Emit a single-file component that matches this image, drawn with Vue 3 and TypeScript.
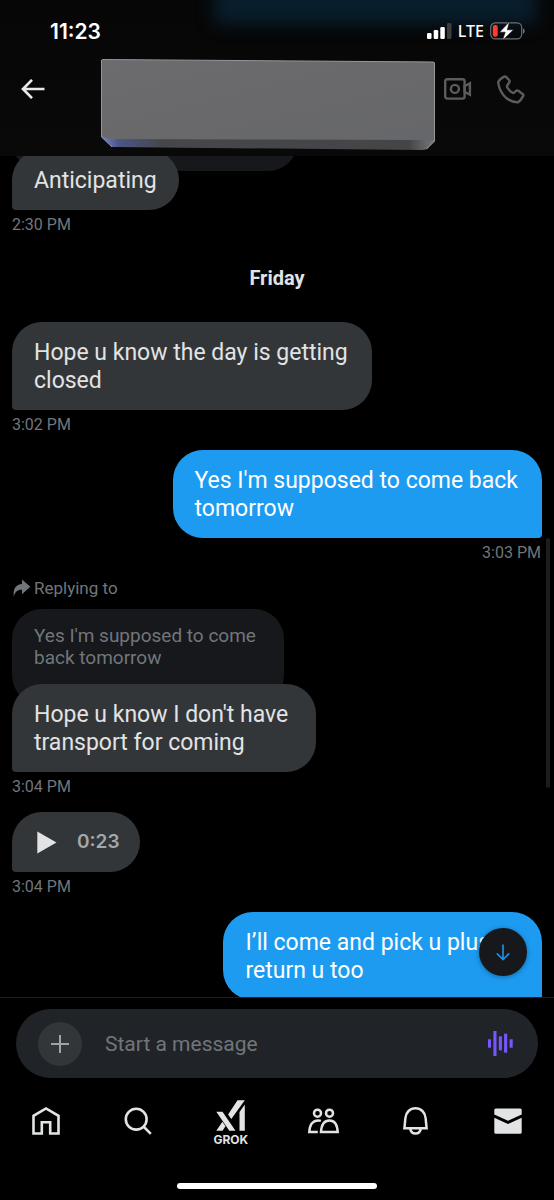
<script setup lang="ts">
import { ref } from 'vue'

interface Message {
  id: number
  kind: 'text' | 'voice'
  sent: boolean
  lines: string[]
  time: string
  room?: 'roomy' | 'wide'
  quote?: string[]
}

const draft = ref('')

const messages: Message[] = [
  { id: 1, kind: 'text', sent: false, lines: ['Hope u know the day is getting', 'closed'], time: '3:02 PM' },
  { id: 2, kind: 'text', sent: true, lines: ["Yes I'm supposed to come back", 'tomorrow'], time: '3:03 PM' },
  {
    id: 3,
    kind: 'text',
    sent: false,
    lines: ["Hope u know I don't have", 'transport for coming'],
    time: '3:04 PM',
    room: 'roomy',
    quote: ["Yes I'm supposed to come", 'back tomorrow'],
  },
  { id: 4, kind: 'voice', sent: false, lines: ['0:23'], time: '3:04 PM' },
  { id: 5, kind: 'text', sent: true, lines: ['I’ll come and pick u plus', 'return u too'], time: '', room: 'wide' },
]
</script>

<template>
  <div class="phone">
    <header class="top">
      <div class="glow"></div>
      <div class="status">
        <span class="clock">11:23</span>
        <div class="indicators">
          <svg width="25" height="16" viewBox="0 0 25 16" fill="#fff">
            <rect x="0" y="10" width="4.5" height="6" rx="1.3" />
            <rect x="6.7" y="7" width="4.5" height="9" rx="1.3" />
            <rect x="13.3" y="4" width="4.5" height="12" rx="1.3" />
            <rect x="20" y="0" width="4.5" height="16" rx="1.3" fill="#3b3d40" />
          </svg>
          <span class="network">LTE</span>
          <svg width="35" height="18" viewBox="0 0 35 18">
            <rect x="0.7" y="0.9" width="31" height="16" rx="4.6" fill="none" stroke="#6d7073" stroke-width="1.2" />
            <path d="M33.2 6.4c1.8.7 1.8 4.5 0 5.2z" fill="#8a8c8e" />
            <rect x="2.8" y="3" width="4.9" height="11.8" rx="2" fill="#ff3b30" />
            <path d="M19.6-.4 9.500 10.2h5.700L12.400 18.400 23.600 7.800h-6.300z" fill="#fff" stroke="#0a0d10" stroke-width="0.600" />
          </svg>
        </div>
      </div>
      <div class="bar">
        <button class="icon-button" type="button" aria-label="Back">
          <svg width="24" height="20" viewBox="0 0 24 20" fill="none" stroke="#e7e9ea" stroke-width="2.700">
            <path d="M11 .9 2 10l9 9.100M2 10h21.500" />
          </svg>
        </button>
        <svg class="plate" viewBox="0 0 334 92" preserveAspectRatio="none" aria-hidden="true">
          <defs>
            <linearGradient id="face" x1="0" y1="0" x2="1" y2="1">
              <stop offset="0" stop-color="#6c6c6e" />
              <stop offset="0.5" stop-color="#69696b" />
              <stop offset="1" stop-color="#66676a" />
            </linearGradient>
            <linearGradient id="lip" x1="0" y1="0" x2="1" y2="0">
              <stop offset="0" stop-color="#7785c4" />
              <stop offset="0.05" stop-color="#4b5688" />
              <stop offset="0.18" stop-color="#46474b" />
              <stop offset="0.92" stop-color="#444547" />
              <stop offset="1" stop-color="#77787a" />
            </linearGradient>
            <linearGradient id="rim" x1="0" y1="0" x2="1" y2="0">
              <stop offset="0" stop-color="#7e8fdc" />
              <stop offset="0.14" stop-color="#909098" />
              <stop offset="1" stop-color="#98989a" />
            </linearGradient>
          </defs>
          <path d="M2 .5 332 3q2 0 2 2V82l-8 8q-2 1-5 1L11 88 .5 78V2q0-1.500 1.500-1.500z" fill="url(#lip)" />
          <path d="M2 .5 332 3q2 0 2 2V81L8 80 .5 77V2q0-1.500 1.500-1.500z" fill="url(#face)" />
          <path d="M11 88 .5 78V2Q.5.500 2 .5L332 3q1.500 0 1.500 2V82l-8 8" fill="none" stroke="url(#rim)" stroke-width="1" />
        </svg>
        <button class="icon-button" type="button" aria-label="Video call">
          <svg width="28" height="22" viewBox="0 0 28 22" fill="none" stroke="#5a5c5e" stroke-width="2.400">
            <rect x="1.200" y="1.200" width="19.400" height="19.400" rx="2" />
            <circle cx="10.900" cy="10.900" r="4" />
            <path d="M20.600 8.200 25.900 5.200v11.600l-5.300-3z" />
          </svg>
        </button>
        <button class="icon-button phone-call" type="button" aria-label="Call">
          <svg width="28" height="29" viewBox="0 0 28 29" fill="none" stroke="#5a5c5e" stroke-width="2.400" stroke-linejoin="round">
            <path d="M6.600 1.900Q8 .900 9.300 2.100L12.100 5q1 1.200.1 2.500L10.200 10.500q-.5 1 .1 2 2 3.600 5.300 5.300 1 .5 1.700-.3l1.800-1.700q1-.8 2.200 0L25.600 19q1.400 1 .4 2.400-1.900 3.800-5.200 6Q12.300 27 6.800 20.400 1.500 14 1.200 6.800 3.200 3.600 6.600 1.900z" />
          </svg>
        </button>
      </div>
    </header>

    <main class="chat">
      <div class="thread">
        <div class="message">
          <div class="quote earlier"></div>
          <p class="bubble single">Anticipating</p>
          <time class="time">2:30 PM</time>
        </div>

        <h2 class="day">Friday</h2>

        <div v-for="m in messages" :key="m.id" class="message" :class="{ sent: m.sent }">
          <template v-if="m.quote">
            <div class="reply-label">
              <svg width="18" height="18" viewBox="0 0 18 18" fill="#71767b">
                <path d="M9 .4 17.300 7.800 9 15.200v-4.400C5 10.500 2.200 12.500.8 17.400-.2 10.200 2.600 5.400 9 4.900z" />
              </svg>
              <span>Replying to</span>
            </div>
            <p class="quote"><span v-for="l in m.quote" :key="l" class="line">{{ l }}</span></p>
          </template>
          <button v-if="m.kind === 'voice'" class="bubble voice" type="button">
            <svg width="20" height="23" viewBox="0 0 20 23" fill="#e1e3e4"><path d="M.3.400 19.500 11.500.3 22.600z" /></svg>
            <span>{{ m.lines[0] }}</span>
          </button>
          <p v-else class="bubble" :class="m.room"><span v-for="l in m.lines" :key="l" class="line">{{ l }}</span></p>
          <time v-if="m.time" class="time">{{ m.time }}</time>
        </div>
      </div>
      <div class="scrollbar"></div>
      <button class="jump" type="button" aria-label="Jump to latest">
        <svg width="14" height="17" viewBox="0 0 14 17" fill="none" stroke="#1d8fe0" stroke-width="1.700">
          <path d="M7 .5v14.800M.8 9.300 7 15.500l6.200-6.200" />
        </svg>
      </button>
    </main>

    <form class="composer" @submit.prevent>
      <div class="field">
        <button class="add" type="button" aria-label="Add">
          <svg width="18" height="18" viewBox="0 0 18 18" stroke="#a0a3a6" stroke-width="2"><path d="M9 0v18M0 9h18" /></svg>
        </button>
        <input v-model="draft" class="input" type="text" placeholder="Start a message" aria-label="Start a message" />
        <button class="wave" type="button" aria-label="Record voice message">
          <svg width="25" height="25" viewBox="0 0 25 25" fill="#7856ff">
            <rect x="0" y="8.300" width="3" height="8.400" />
            <rect x="5.400" y="0" width="3.100" height="25" />
            <rect x="10.800" y="5.300" width="3.100" height="14" />
            <rect x="16.100" y="2.700" width="3.100" height="19" />
            <rect x="21.600" y="8.300" width="3.100" height="8.400" />
          </svg>
        </button>
      </div>
    </form>

    <nav class="tabs">
      <a href="#home" aria-label="Home">
        <svg width="28" height="28" viewBox="0 0 28 28" fill="none" stroke="#e1e3e4" stroke-width="2.600">
          <path d="M1.500 26.500V8.800L14 1.500l12.500 7.300v17.700h-8.300V15.200H9.800v11.300z" />
        </svg>
      </a>
      <a href="#search" aria-label="Search">
        <svg width="28" height="28" viewBox="0 0 28 28" fill="none" stroke="#e1e3e4" stroke-width="2.600">
          <circle cx="12.200" cy="12.200" r="10.400" /><path d="m19.500 19.500 7.300 7.300" />
        </svg>
      </a>
      <a class="grok" href="#grok">
        <svg width="29" height="31" viewBox="0 0 29 31" fill="#e1e3e4">
          <path d="M.3 11.700h6.200l13 19h-6.200zM.3 30.700h6.200l3-4.400-3.100-4.500zM21.500.200h7.300L15.300 19l-3.200-4.600zM28.800 4.500v26.200h-5.300V12z" />
        </svg>
        <span>GROK</span>
      </a>
      <a href="#communities" aria-label="Communities">
        <svg width="31" height="26" viewBox="0 0 31 26" fill="none" stroke="#e1e3e4" stroke-width="2.500">
          <circle cx="9.500" cy="5.200" r="3.500" /><circle cx="21.500" cy="5.200" r="3.500" />
          <path d="M9.800 24H1.300C1.700 16.400 5.200 12.400 10 12.400q1.600 0 2.900.5" />
          <path d="M13 24c.4-7.600 3.800-11.600 8.500-11.600S29.300 16.400 29.700 24z" />
        </svg>
      </a>
      <a href="#notifications" aria-label="Notifications">
        <svg width="25" height="28" viewBox="0 0 25 28" fill="none" stroke="#e1e3e4" stroke-width="2.500">
          <path d="M2.400 11C2.900 5.200 7 1.300 12.500 1.300S22.100 5.200 22.600 11l1 10.300H1.400zM7.200 21.500c.4 3.200 2.500 5 5.300 5s4.900-1.800 5.300-5" />
        </svg>
      </a>
      <a href="#messages" aria-label="Messages">
        <svg width="28" height="26" viewBox="0 0 28 26" fill="#e1e3e4">
          <path d="M.3 2Q.3.500 1.800.500h24.400q1.500 0 1.500 1.500v4.500L14 12.800.3 6.500zM.3 9.700 14 16l13.700-6.300v14.500q0 1.500-1.500 1.500H1.800q-1.500 0-1.500-1.500z" />
        </svg>
      </a>
    </nav>
    <div class="home-bar"></div>
  </div>
</template>

<style>
body {
  margin: 0;
  background: #000;
}
</style>

<style scoped>
* {
  box-sizing: border-box;
}
.phone {
  display: flex;
  flex-direction: column;
  height: 100vh;
  overflow: hidden;
  background: #000;
  color: #e1e3e4;
  font-family: Roboto, "Liberation Sans", sans-serif;
}
button {
  padding: 0;
  border: 0;
  background: none;
  color: inherit;
  font: inherit;
  display: flex;
  align-items: center;
}
p,
h2 {
  margin: 0;
}
svg {
  display: block;
  flex: none;
}
.top {
  position: relative;
  flex: none;
  overflow: hidden;
  background: linear-gradient(#060606, #09090a);
  padding: 20px 29px 5px 21px;
}
.glow {
  position: absolute;
  top: -20px;
  left: 214px;
  right: 18px;
  height: 44px;
  background: #081e2c;
  filter: blur(8px);
}
.status {
  position: relative;
  display: flex;
  align-items: center;
  justify-content: space-between;
  height: 22px;
  padding-left: 29px;
}
.clock {
  font-family: Inter, sans-serif;
  font-size: 21px;
  font-weight: 600;
  color: #fff;
}
.indicators {
  display: flex;
  align-items: center;
  gap: 6px;
}
.network {
  font-family: "Noto Sans", sans-serif;
  font-size: 16px;
  font-weight: 500;
  line-height: 20px;
  color: #fff;
}
.bar {
  position: relative;
  display: flex;
  align-items: flex-start;
  margin-top: 17px;
}
.icon-button {
  height: 60px;
  flex: none;
}
.plate {
  flex: 1;
  min-width: 0;
  height: 92px;
  margin: 0 9px 0 56px;
}
.phone-call {
  margin-left: 25px;
}
.chat {
  position: relative;
  flex: 1;
  min-height: 0;
  overflow: hidden;
  border-bottom: 1px solid #1c1d1f;
}
.thread {
  padding: 0 12px;
  margin-top: -81px;
}
.message {
  display: flex;
  flex-direction: column;
  align-items: flex-start;
}
.message.sent {
  align-items: flex-end;
}
.bubble {
  position: relative;
  padding: 17px 24px 15px 22px;
  border-radius: 30px 30px 30px 4px;
  background: #333639;
  font-size: 23px;
  line-height: 28px;
}
.bubble.single {
  padding-right: 22px;
}
.bubble.roomy {
  padding-right: 28px;
}
.bubble.wide {
  padding-right: 52px;
}
.sent .bubble {
  background: #1d9bf0;
  color: #fff;
  border-radius: 30px 30px 4px 30px;
}
.line {
  display: block;
}
.time {
  margin: 5px 0 15px;
  color: #71767b;
  font-size: 16px;
  line-height: 20px;
}
.sent .time {
  margin-right: 1px;
}
.day {
  margin: 16px 0 32px;
  text-align: center;
  font-size: 20px;
  line-height: 24px;
  font-weight: 700;
}
.reply-label {
  display: flex;
  align-items: center;
  gap: 3px;
  margin-bottom: 11px;
  padding-left: 1px;
  font-size: 17px;
  line-height: 20px;
  color: #71767b;
}
.quote {
  padding: 16px 28px 36px 22px;
  margin-bottom: -21px;
  border-radius: 30px;
  background: #17181c;
  color: #71767b;
  font-size: 19px;
  line-height: 22px;
}
.quote.earlier {
  width: 54%;
  height: 96px;
}
.voice {
  gap: 20px;
  height: 60px;
  padding: 0 20px 0 25px;
}
.voice span {
  font-family: Inter, sans-serif;
  font-size: 19px;
  font-weight: 600;
  color: #a5a8aa;
}
.scrollbar {
  position: absolute;
  right: 4px;
  top: 382px;
  width: 4px;
  height: 250px;
  border-radius: 2px;
  background: #1b1c1e;
}
.jump {
  position: absolute;
  right: 27px;
  bottom: 21px;
  width: 48px;
  height: 48px;
  justify-content: center;
  border-radius: 50%;
  background: #16181c;
  box-shadow: 0 1px 5px rgba(0, 0, 0, 0.35);
}
.composer {
  flex: none;
  padding: 11px 16px 0;
}
.field {
  display: flex;
  align-items: center;
  height: 69px;
  padding: 0 25px 0 22px;
  border-radius: 35px;
  background: #202327;
}
.add {
  flex: none;
  width: 44px;
  height: 44px;
  justify-content: center;
  border-radius: 50%;
  background: #333639;
}
.input {
  flex: 1;
  min-width: 0;
  margin: 0 20px 0 23px;
  padding: 0;
  border: 0;
  outline: 0;
  background: transparent;
  color: #e1e3e4;
  font: inherit;
  font-size: 21px;
  line-height: 28px;
}
.input::placeholder {
  color: #71767b;
  opacity: 1;
}
.tabs {
  flex: none;
  display: grid;
  grid-template-columns: repeat(6, 1fr);
  height: 86px;
}
.tabs a {
  display: flex;
  flex-direction: column;
  align-items: center;
  justify-content: center;
  color: #e1e3e4;
  text-decoration: none;
}
.tabs .grok {
  gap: 3px;
  padding-top: 4px;
}
.grok span {
  font-family: Inter, sans-serif;
  font-size: 12px;
  line-height: 12px;
  font-weight: 700;
}
.home-bar {
  flex: none;
  align-self: center;
  width: 36%;
  height: 6px;
  margin: 19px 0 11px;
  border-radius: 3px;
  background: #fff;
}
</style>
